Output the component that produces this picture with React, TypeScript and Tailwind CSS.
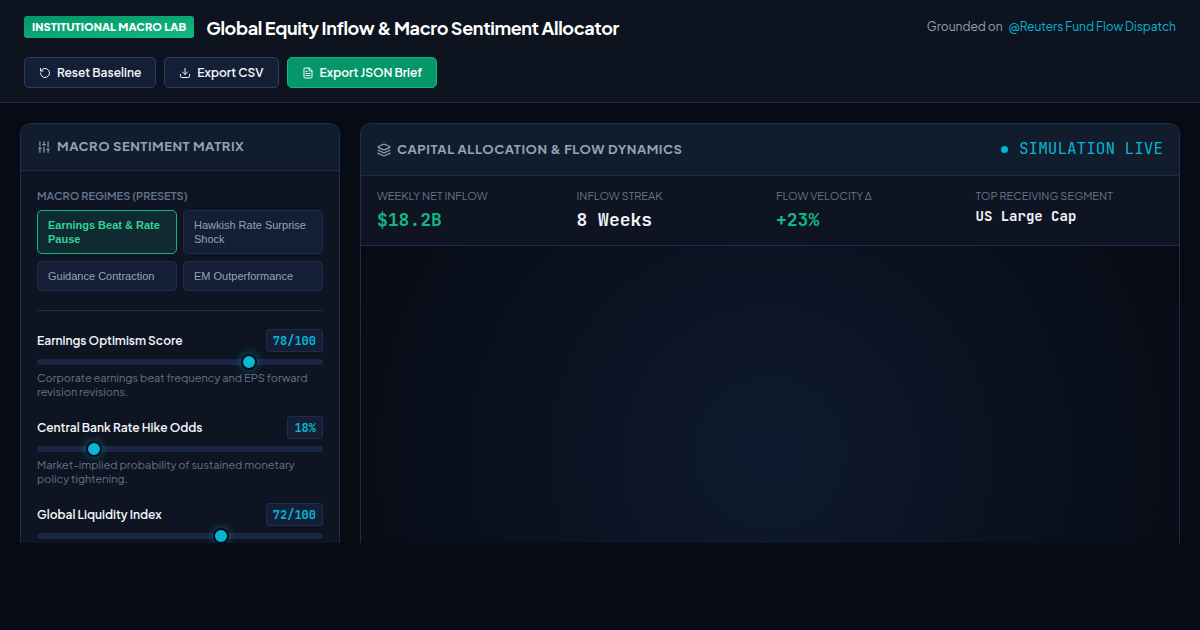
import React, { useState } from "react";
import { Download, FileText, Layers, RotateCcw, SlidersVertical } from "lucide-react";
import clsx from "clsx";

interface MacroFactor {
  id: string;
  label: string;
  description?: string;
  min: number;
  max: number;
  value: number;
  unit: string;
}

interface Metric {
  label: string;
  value: string;
  valueClass: string;
}

const PRESETS = [
  "Earnings Beat & Rate Pause",
  "Hawkish Rate Surprise Shock",
  "Guidance Contraction",
  "EM Outperformance",
];

const BASELINE: MacroFactor[] = [
  {
    id: "earnings",
    label: "Earnings Optimism Score",
    description: "Corporate earnings beat frequency and EPS forward revision revisions.",
    min: 10,
    max: 100,
    value: 78,
    unit: "/100",
  },
  {
    id: "rate-hike",
    label: "Central Bank Rate Hike Odds",
    description: "Market-implied probability of sustained monetary policy tightening.",
    min: 0,
    max: 100,
    value: 18,
    unit: "%",
  },
  {
    id: "liquidity",
    label: "Global Liquidity Index",
    min: 20,
    max: 100,
    value: 72,
    unit: "/100",
  },
];

const METRICS: Metric[] = [
  { label: "Weekly Net Inflow", value: "$18.2B", valueClass: "text-lg leading-[26px] text-[#10b981]" },
  { label: "Inflow Streak", value: "8 Weeks", valueClass: "text-lg leading-[26px] text-[#f1f5f9]" },
  { label: "Flow Velocity Δ", value: "+23%", valueClass: "text-lg leading-[26px] text-[#10b981]" },
  { label: "Top Receiving Segment", value: "US Large Cap", valueClass: "text-sm leading-[18px] text-[#f1f5f9]" },
];

const MONO = "font-['JetBrains_Mono','DejaVu_Sans_Mono',monospace]";

interface SliderFieldProps {
  factor: MacroFactor;
  onChange: (id: string, value: number) => void;
}

const SliderField: React.FC<SliderFieldProps> = ({ factor, onChange }) => (
  <div>
    <div className="flex items-center justify-between">
      <label htmlFor={factor.id} className="text-[12px] leading-4 font-semibold text-[#f1f5f9]">
        {factor.label}
      </label>
      <output
        htmlFor={factor.id}
        className={clsx(
          MONO,
          "h-[23px] rounded-[3px] border border-[#1e2d4f] bg-[#141e35] px-1.5 text-[12px] leading-[22px] font-bold text-[#06b6d4]"
        )}
      >
        {factor.value}
        {factor.unit}
      </output>
    </div>
    <input
      id={factor.id}
      type="range"
      min={factor.min}
      max={factor.max}
      value={factor.value}
      onChange={(e) => onChange(factor.id, Number(e.target.value))}
      className="mt-[7px] block h-1.5 w-full cursor-pointer appearance-none rounded-[3px] bg-[#1a2744] outline-none [&::-webkit-slider-thumb]:size-4 [&::-webkit-slider-thumb]:appearance-none [&::-webkit-slider-thumb]:rounded-full [&::-webkit-slider-thumb]:border-2 [&::-webkit-slider-thumb]:border-[#070b14] [&::-webkit-slider-thumb]:bg-[#06b6d4] [&::-webkit-slider-thumb]:shadow-[0_0_8px_rgba(6,182,212,0.5)]"
    />
    {factor.description && (
      <p className="mt-1.5 text-[11px] leading-[14px] text-[#64748b]">{factor.description}</p>
    )}
  </div>
);

const App: React.FC = () => {
  const [factors, setFactors] = useState<MacroFactor[]>(BASELINE);
  const [preset, setPreset] = useState(PRESETS[0]);

  const handleFactorChange = (id: string, value: number) => {
    setFactors((prev) => prev.map((f) => (f.id === id ? { ...f, value } : f)));
  };

  const handleReset = () => {
    setFactors(BASELINE);
    setPreset(PRESETS[0]);
  };

  return (
    <div className="flex h-screen flex-col overflow-hidden bg-[#070b14] pb-[87px] font-['Plus_Jakarta_Sans','Inter',sans-serif] text-[#f1f5f9]">
      <header className="flex flex-wrap items-start justify-between border-b border-[#1e2d4f] bg-[#0d1420] px-6 pt-4 pb-3.5">
        <div className="flex flex-col gap-[17px]">
          <div className="flex h-6 items-center gap-3">
            <span className="mb-0.5 rounded-[3px] bg-linear-to-br from-[#059669] to-[#10b981] px-2 text-[11px] leading-[22px] font-extrabold tracking-[0.01em] text-white uppercase">
              Institutional Macro Lab
            </span>
            <h1 className="text-lg leading-6 font-bold tracking-[-0.02em] text-white">
              Global Equity Inflow &amp; Macro Sentiment Allocator
            </h1>
          </div>
          <div className="flex gap-2">
            <button
              onClick={handleReset}
              className="flex h-[31px] items-center gap-1.5 rounded-[5px] border border-[#2a3d66] bg-[#141e35] px-3.5 text-[12px] font-semibold"
            >
              <RotateCcw size={12} />
              Reset Baseline
            </button>
            <button className="flex h-[31px] items-center gap-1.5 rounded-[5px] border border-[#2a3d66] bg-[#141e35] px-3.5 text-[12px] font-semibold">
              <Download size={12} />
              Export CSV
            </button>
            <button className="flex h-[31px] items-center gap-1.5 rounded-[5px] border border-[#10b981] bg-[#059669] px-3.5 text-[12px] font-semibold text-white">
              <FileText size={12} />
              Export JSON Brief
            </button>
          </div>
        </div>
        <p className="flex gap-1.5 text-[12px] leading-[22px] text-[#94a3b8]">
          Grounded on
          <a href="#dispatch" className="text-[#06b6d4]">
            @Reuters Fund Flow Dispatch
          </a>
        </p>
      </header>

      <main className="grid min-h-0 flex-1 grid-cols-[320px_minmax(0,1fr)] gap-5 overflow-hidden px-5 pt-5">
        <section className="min-h-0 overflow-hidden rounded-t-[10px] border border-b-0 border-[#1e2d4f] bg-[#0e1422]">
          <h2 className="flex h-[47px] items-center gap-1.5 border-b border-[#1e2d4f] bg-[#111c2c] px-4 text-[13px] font-bold tracking-[0.04em] text-[#94a3b8] uppercase">
            <SlidersVertical size={14} />
            Macro Sentiment Matrix
          </h2>
          <div className="flex flex-col px-4 pt-[18px]">
            <h3 className="text-[11px] leading-[14px] font-semibold text-[#64748b] uppercase">
              Macro Regimes (Presets)
            </h3>
            <div className="mt-[7px] grid grid-cols-2 gap-x-1.5 gap-y-[7px] border-b border-[#1e2d4f] pb-[19px]">
              {PRESETS.map((name) => (
                <button
                  key={name}
                  aria-pressed={preset === name}
                  onClick={() => setPreset(name)}
                  className={clsx(
                    "rounded-[5px] border px-2.5 py-[7px] text-left font-['Liberation_Sans',sans-serif] text-[11px] leading-[14px]",
                    preset === name
                      ? "border-[#10b981] bg-[#0f2a30] font-bold text-[#34d399]"
                      : "border-[#1e2d4f] bg-[#141e35] text-[#94a3b8]"
                  )}
                >
                  {name}
                </button>
              ))}
            </div>
            <div className="flex flex-col gap-[17px] pt-[18px]">
              {factors.map((factor) => (
                <SliderField key={factor.id} factor={factor} onChange={handleFactorChange} />
              ))}
            </div>
          </div>
        </section>

        <section className="flex min-h-0 flex-col overflow-hidden rounded-t-[10px] border border-b-0 border-[#1e2d4f] bg-[#0e1422]">
          <div className="flex h-[52px] shrink-0 items-center justify-between border-b border-[#1e2d4f] bg-[#111c2c] px-4">
            <h2 className="flex items-center gap-1.5 text-[13px] font-bold tracking-[0.04em] text-[#94a3b8] uppercase">
              <Layers size={14} />
              Capital Allocation &amp; Flow Dynamics
            </h2>
            <span className={clsx(MONO, "flex items-center gap-[11px] pb-px text-base text-[#06b6d4]")}>
              <span className="size-[7px] rounded-full bg-[#06b6d4]" />
              SIMULATION LIVE
            </span>
          </div>
          <dl className="grid shrink-0 grid-cols-4 gap-3 border-b border-[#1e2d4f] px-4 py-3">
            {METRICS.map((metric) => (
              <div key={metric.label}>
                <dt className="text-[11px] leading-4 text-[#64748b] uppercase">{metric.label}</dt>
                <dd className={clsx(MONO, "mt-[3px] font-bold", metric.valueClass)}>{metric.value}</dd>
              </div>
            ))}
          </dl>
          <div className="min-h-0 flex-1 bg-[radial-gradient(circle_460px_at_50%_70%,#0e1a2e,#070b14)]" />
        </section>
      </main>
    </div>
  );
};

export default App;
